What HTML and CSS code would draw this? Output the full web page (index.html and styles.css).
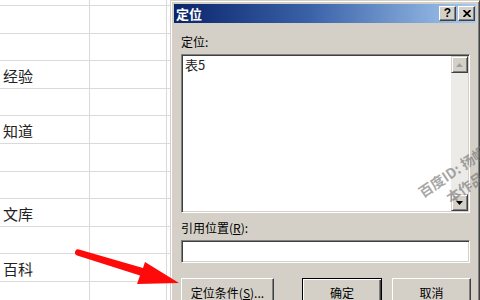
FILE: index.html
```html
<!DOCTYPE html>
<html lang="zh-CN">
<head>
  <meta charset="UTF-8">
  <title>定位</title>
  <link rel="stylesheet" href="styles.css">
</head>
<body>

  <!-- Worksheet behind the dialog -->
  <div class="sheet">
    <div class="row"><div class="cell"></div><div class="cell"></div><div class="cell"></div></div>
    <div class="row"><div class="cell"></div><div class="cell"></div><div class="cell"></div></div>
    <div class="row"><div class="cell"></div><div class="cell"></div><div class="cell"></div></div>
    <div class="row"><div class="cell">经验</div><div class="cell"></div><div class="cell"></div></div>
    <div class="row"><div class="cell"></div><div class="cell"></div><div class="cell"></div></div>
    <div class="row"><div class="cell">知道</div><div class="cell"></div><div class="cell"></div></div>
    <div class="row"><div class="cell"></div><div class="cell"></div><div class="cell"></div></div>
    <div class="row"><div class="cell"></div><div class="cell"></div><div class="cell"></div></div>
    <div class="row"><div class="cell">文库</div><div class="cell"></div><div class="cell"></div></div>
    <div class="row"><div class="cell"></div><div class="cell"></div><div class="cell"></div></div>
    <div class="row"><div class="cell">百科</div><div class="cell"></div><div class="cell"></div></div>
    <div class="row"><div class="cell"></div><div class="cell"></div><div class="cell"></div></div>
  </div>

  <!-- Go To dialog -->
  <div class="dialog">
    <div class="titlebar">
      <span class="title">定位</span>
      <div class="title-btns">
        <div class="tbtn help">?</div>
        <div class="tbtn">
          <svg width="8" height="7" viewBox="0 0 8 7"><path d="M0.5 0 L7.5 7 M7.5 0 L0.5 7" stroke="#000" stroke-width="1.8"/></svg>
        </div>
      </div>
    </div>

    <div class="dialog-body">
      <div class="label first">定位:</div>
      <div class="listbox sunken">
        <div class="list-items">
          <div class="item">表5</div>
        </div>
        <div class="scrollbar">
          <div class="sbtn raised">
            <svg width="7" height="4" viewBox="0 0 7 4"><path d="M0 4 L3.5 0 L7 4 Z" fill="#a0a0a0"/></svg>
          </div>
          <div class="track"></div>
          <div class="sbtn raised">
            <svg width="7" height="4" viewBox="0 0 7 4"><path d="M0 0 L3.5 4 L7 0 Z" fill="#000"/></svg>
          </div>
        </div>
      </div>

      <div class="label">引用位置(<u>R</u>):</div>
      <div class="input sunken"></div>

      <div class="buttons">
        <div class="btn wide">定位条件(<u>S</u>)...</div>
        <div class="btn default">确定</div>
        <div class="btn">取消</div>
      </div>
    </div>
  </div>

  <!-- Watermark -->
  <div class="watermark">
    <div>百度ID: 扬帆远航</div>
    <div class="second">本作品版权所有</div>
  </div>

  <!-- Red pointer arrow -->
  <svg class="arrow" width="480" height="300" viewBox="0 0 480 300">
    <path d="M79 249.6 L143 268 L145 262 L179 283 L137 284 L140 275.6 L77.1 255.4 A3 3 0 0 1 79 249.6 Z" fill="#ff0a0a"/>
  </svg>

</body>
</html>
```

FILE: styles.css
```css
* {
  margin: 0;
  padding: 0;
  box-sizing: border-box;
}

body {
  width: 480px;
  height: 300px;
  overflow: hidden;
  position: relative;
  background-color: #fff;
  font-family: "Noto Sans CJK SC", "Liberation Sans", sans-serif;
}

/* Worksheet */
.sheet {
  margin-top: -21.6px;
}

.row {
  display: grid;
  grid-template-columns: 90px 77px 1fr;
  height: 27.6px;
}

.cell {
  border-right: 1px solid #dadada;
  border-bottom: 1px solid #dadada;
  padding: 2px 0 0 3px;
  font-size: 15px;
  line-height: 25px;
  color: #222;
}

/* Dialog window */
.dialog {
  position: absolute;
  left: 170px;
  top: 0;
  width: 310px;
  height: 320px;
  background-color: #d4d0c8;
  border: 1px solid;
  border-color: #d4d0c8 #404040 #404040 #d4d0c8;
  box-shadow: inset 1px 1px #fff, inset -1px -1px #808080;
  padding: 3px;
  font-size: 12px;
  color: #000;
}

.titlebar {
  height: 19px;
  background: linear-gradient(to right, #0a246a, #3a62a8 45%, #a6caf0);
  display: flex;
  align-items: center;
  justify-content: space-between;
  padding: 0 1px 0 2px;
}

.title {
  color: #fff;
  font-weight: bold;
  font-size: 13px;
  line-height: 19px;
}

.title-btns {
  display: flex;
  gap: 2px;
}

.tbtn {
  width: 17px;
  height: 15px;
  background-color: #d4d0c8;
  border: 1px solid;
  border-color: #fff #404040 #404040 #fff;
  box-shadow: inset -1px -1px #808080;
  display: flex;
  align-items: center;
  justify-content: center;
}

.tbtn.help {
  font-family: "Liberation Sans", sans-serif;
  font-weight: bold;
  font-size: 12px;
  line-height: 13px;
}

.dialog-body {
  padding: 0 6px 0 7px;
}

.label {
  margin-top: 8px;
  line-height: 14px;
  padding-left: 0;
}

.label.first {
  margin-top: 12px;
}

.sunken {
  background-color: #fff;
  border: 1px solid;
  border-color: #808080 #fff #fff #808080;
  box-shadow: inset 1px 1px #404040, inset -1px -1px #d4d0c8;
}

.raised {
  background-color: #d4d0c8;
  border: 1px solid;
  border-color: #d4d0c8 #404040 #404040 #d4d0c8;
  box-shadow: inset 1px 1px #fff, inset -1px -1px #808080;
}

.listbox {
  margin-top: 5px;
  height: 159px;
  display: flex;
  padding: 1px 1px 1px 1px;
}

.list-items {
  flex: 1;
  padding: 1px 0 0 2px;
}

.item {
  font-size: 13px;
  line-height: 15px;
  color: #222;
}

.scrollbar {
  width: 17px;
  display: flex;
  flex-direction: column;
}

.sbtn {
  height: 17px;
  display: flex;
  align-items: center;
  justify-content: center;
}

.track {
  flex: 1;
  background-color: #ecebe7;
}

.input {
  margin-top: 5px;
  height: 23px;
}

.buttons {
  display: flex;
  margin-top: 15px;
  margin-right: -1px;
  gap: 10px;
}

.btn {
  width: 79px;
  height: 25px;
  background-color: #d4d0c8;
  border: 1px solid;
  border-color: #fff #404040 #404040 #fff;
  box-shadow: inset -1px -1px #808080;
  text-align: center;
  line-height: 25px;
  padding-top: 1px;
}

.btn.wide {
  width: 93px;
  margin-right: 18px;
}

.btn.default {
  width: 80px;
  border-color: #000;
  box-shadow: inset 1px 1px #fff, inset -1px -1px #404040, inset -2px -2px #808080;
}

/* Watermark over the dialog */
.watermark {
  position: absolute;
  left: 414px;
  top: 185px;
  transform: rotate(-34deg);
  transform-origin: 0 0;
  white-space: nowrap;
  font-size: 14px;
  font-weight: bold;
  line-height: 20px;
  color: rgba(110, 110, 110, 0.6);
}

.watermark .second {
  padding-left: 20px;
}

/* Arrow overlay */
.arrow {
  position: absolute;
  left: 0;
  top: 0;
  pointer-events: none;
}
```
